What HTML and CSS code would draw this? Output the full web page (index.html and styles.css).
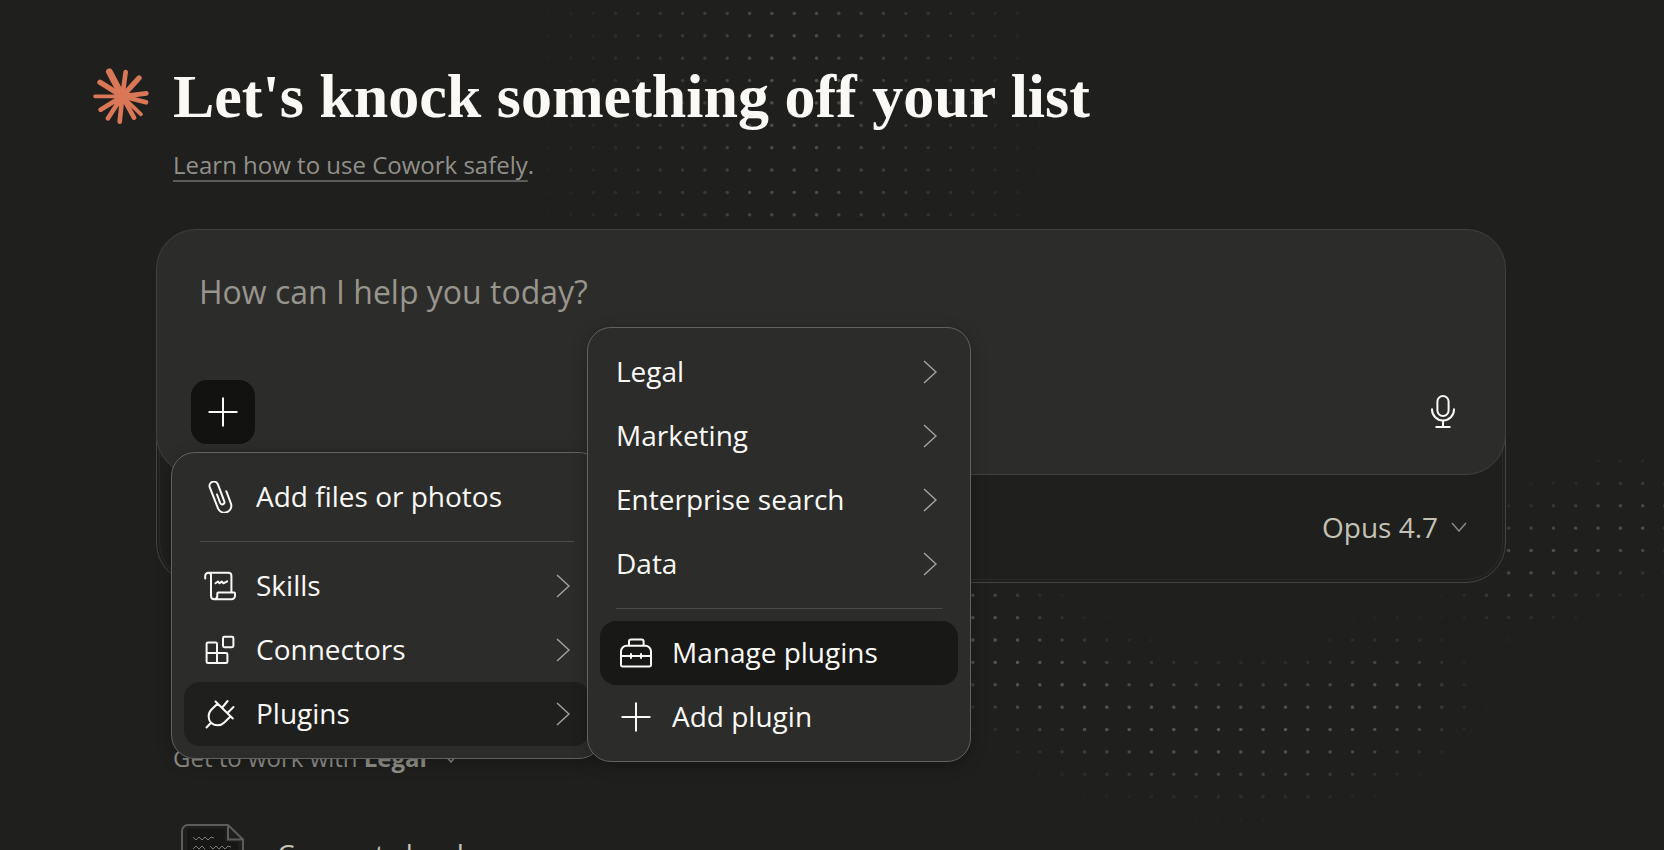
FILE: index.html
```html
<!DOCTYPE html>
<html lang="en">
<head>
  <meta charset="UTF-8">
  <meta name="viewport" content="width=device-width, initial-scale=1.0">
  <title>Cowork</title>
  <link rel="stylesheet" href="styles.css">
</head>
<body>
  <!-- Shared icons -->
  <svg class="sprite" aria-hidden="true">
    <symbol id="chevron-right" viewBox="0 0 14 24"><path d="M1 1l12 11L1 23"/></symbol>
    <symbol id="chevron-down" viewBox="0 0 16 10"><path d="M1 1l7 8 7-8"/></symbol>
    <symbol id="plus" viewBox="0 0 32 32"><path d="M16 2.3v27.4M2.3 16h27.4"/></symbol>
  </svg>

  <!-- Dotted backdrop -->
  <svg class="dots" viewBox="0 0 1664 850" preserveAspectRatio="xMidYMin slice" aria-hidden="true">
    <defs>
      <pattern id="dotGrid" x="783" y="2.2" width="22.33" height="22.38" patternUnits="userSpaceOnUse">
        <circle cx="11.2" cy="11.2" r="1.7" fill="#62625f"/>
      </pattern>
      <radialGradient id="glow">
        <stop offset="0" stop-color="#fff" stop-opacity="0.85"/>
        <stop offset="0.35" stop-color="#fff" stop-opacity="0.45"/>
        <stop offset="1" stop-color="#fff" stop-opacity="0"/>
      </radialGradient>
      <filter id="soften" x="-50%" y="-50%" width="200%" height="200%">
        <feGaussianBlur stdDeviation="26"/>
      </filter>
      <mask id="fade" maskUnits="userSpaceOnUse" x="0" y="0" width="1664" height="850">
        <ellipse cx="794" cy="100" rx="270" ry="700" fill="url(#glow)"/>
        <g fill="none" stroke="#fff" filter="url(#soften)">
          <path d="M950 590Q1020 705 1180 728T1430 670" stroke-width="100" stroke-opacity="0.9"/>
          <path d="M1480 590Q1560 530 1720 510" stroke-width="80" stroke-opacity="0.85"/>
        </g>
      </mask>
    </defs>
    <rect width="1664" height="850" fill="url(#dotGrid)" mask="url(#fade)"/>
  </svg>

  <main class="page">
    <header class="intro">
      <svg class="logo" viewBox="24 22 168 168" aria-hidden="true">
        <circle cx="112" cy="107" r="24" fill="#d97757"/>
        <g stroke="#d97757" stroke-linecap="round">
          <path stroke-width="20" d="M112 107L73 33"/>
          <path stroke-width="16" d="M112 107L45 65M112 107L162 52"/>
          <path stroke-width="14" d="M112 107L122 34M112 107L184 98M112 107L183 125M112 107L147 171M112 107L104 183M112 107L69 173M112 107L47 147"/>
          <path stroke-width="11" d="M112 107L30 107M112 107L168 161"/>
        </g>
      </svg>
      <div class="intro-text">
        <h1>Let's knock something off your list</h1>
        <p class="safety"><a href="#">Learn how to use Cowork safely</a>.</p>
      </div>
    </header>

    <div class="content">
      <div class="composer-wrap">
        <form class="composer">
          <textarea class="prompt" aria-label="Message" placeholder="How can I help you today?"></textarea>
          <div class="composer-actions">
            <button type="button" class="add-button" aria-label="Add">
              <svg class="icon" viewBox="0 0 32 32"><use href="#plus"/></svg>
            </button>
            <button type="button" class="mic-button" aria-label="Dictate">
              <svg class="mic-icon" viewBox="0 0 36 36">
                <rect x="12.4" y="2" width="11.2" height="20" rx="5.6"/>
                <path d="M7 14.5v1a11 11 0 0 0 22 0v-1M18 26.5V33M10.5 33h15"/>
              </svg>
            </button>
          </div>
        </form>

        <div class="tray">
          <label class="model-picker">
            <select aria-label="Model">
              <option>Opus 4.7</option>
            </select>
            <svg class="chevron-down" viewBox="0 0 16 10"><use href="#chevron-down"/></svg>
          </label>
        </div>

        <div class="menu add-menu" role="menu">
          <button type="button" class="menu-item" role="menuitem">
            <svg class="icon" viewBox="0 0 32 32">
              <path d="M22.3 10.2l4.6 12.2a6.9 6.9 0 0 1-13 4.8L5.8 6.4A4.3 4.3 0 0 1 13.9 3.4l6.4 17a2.2 2.2 0 0 1-4.1 1.6L13 13.5"/>
            </svg>
            <span>Add files or photos</span>
          </button>
          <hr>
          <button type="button" class="menu-item" role="menuitem">
            <svg class="icon" viewBox="0 0 32 32">
              <path d="M1.2 8.5V6a3.2 3.2 0 0 1 3.2-3.2h20a3 3 0 0 1 3 3v16.500M4.400 2.800A2.600 2.600 0 0 1 7 5.400V26a3.300 3.300 0 0 0 3.300 3.200h17.200a3.500 3.500 0 0 0 3.500-3.500v-2.200a1 1 0 0 0-1-1H14.300a1 1 0 0 0-1 1V26a3.200 3.200 0 0 1-3 3.200"/>
              <path d="M11.500 13.300l2.500-1.800 1.600 1.800 2.200-1.800 1.600 1.800 3.800-2"/>
            </svg>
            <span>Skills</span>
            <svg class="chevron" viewBox="0 0 14 24"><use href="#chevron-right"/></svg>
          </button>
          <button type="button" class="menu-item" role="menuitem">
            <svg class="icon" viewBox="0 0 32 32">
              <path d="M13 19V9.800a1.400 1.400 0 0 0-1.400-1.400H4a1.400 1.400 0 0 0-1.400 1.400v17.900A1.400 1.400 0 0 0 4 29.100h18a1.400 1.400 0 0 0 1.400-1.400v-7.300A1.400 1.400 0 0 0 22 19H2.600M13 19v10"/>
              <rect x="19" y="2.800" width="10.400" height="10.400" rx="1.400"/>
            </svg>
            <span>Connectors</span>
            <svg class="chevron" viewBox="0 0 14 24"><use href="#chevron-right"/></svg>
          </button>
          <button type="button" class="menu-item open" role="menuitem" aria-expanded="true">
            <svg class="icon" viewBox="0 0 32 32">
              <path d="M11.500 3.500l17.300 17M18.300 9.500L23.600 3M23.500 15l6-6M13.500 5.700l-6 5.800c-4 4-3.500 10-.5 13.100 3.500 3.700 9.500 3.600 13 .1l6.500-6.200M2.500 29.500L7 24.800"/>
            </svg>
            <span>Plugins</span>
            <svg class="chevron" viewBox="0 0 14 24"><use href="#chevron-right"/></svg>
          </button>
        </div>

        <div class="menu plugin-menu" role="menu">
          <button type="button" class="menu-item text-only" role="menuitem">
            <span>Legal</span>
            <svg class="chevron" viewBox="0 0 14 24"><use href="#chevron-right"/></svg>
          </button>
          <button type="button" class="menu-item text-only" role="menuitem">
            <span>Marketing</span>
            <svg class="chevron" viewBox="0 0 14 24"><use href="#chevron-right"/></svg>
          </button>
          <button type="button" class="menu-item text-only" role="menuitem">
            <span>Enterprise search</span>
            <svg class="chevron" viewBox="0 0 14 24"><use href="#chevron-right"/></svg>
          </button>
          <button type="button" class="menu-item text-only" role="menuitem">
            <span>Data</span>
            <svg class="chevron" viewBox="0 0 14 24"><use href="#chevron-right"/></svg>
          </button>
          <hr>
          <button type="button" class="menu-item active" role="menuitem">
            <svg class="icon" viewBox="0 0 32 32">
              <path d="M1 27.800V14.500a5.700 5.700 0 0 1 5.700-5.700h18.600a5.700 5.700 0 0 1 5.700 5.700v13.300a1.700 1.700 0 0 1-1.700 1.700H2.700A1.700 1.700 0 0 1 1 27.800zM1 19h30M11 17v4M21 17v4M9 8.800V4.600a2 2 0 0 1 2-2h10.600a2 2 0 0 1 2 2v4.200"/>
            </svg>
            <span>Manage plugins</span>
          </button>
          <button type="button" class="menu-item" role="menuitem">
            <svg class="icon" viewBox="0 0 32 32"><use href="#plus"/></svg>
            <span>Add plugin</span>
          </button>
        </div>
      </div>

      <section class="suggestions">
        <button type="button" class="suggestion-picker">
          <span>Get to work with <strong>Legal</strong></span>
          <svg class="chevron-down" viewBox="0 0 16 10"><use href="#chevron-down"/></svg>
        </button>
        <a href="#" class="suggestion">
          <svg class="doc-icon" viewBox="0 0 64 76">
            <path class="doc-fill" d="M6 5h38v13h13v58H6z"/>
            <path d="M47 1H7a6 6 0 0 0-6 6v62a6 6 0 0 0 6 6h49a6 6 0 0 0 6-6V15.500zM47 1v14.500h15"/>
            <path class="doc-lines" d="M12 13l3 3 3-3 3 3 3-3 3 3 3-3 3 1M12 25l3-3 3 3 3-3 3 3M29 22l3 3 3-3 3 3 3-3 3 3 3-3 3 1"/>
          </svg>
          <span>Connect cloud</span>
        </a>
      </section>
    </div>
  </main>
</body>
</html>
```
FILE: styles.css
```css
* {
  box-sizing: border-box;
}
body {
  position: relative;
  height: 100vh;
  margin: 0;
  overflow: hidden;
  background-color: #1f1f1e;
  color: #faf9f5;
  font-family: "Open Sans", "Liberation Sans", sans-serif;
  font-size: 28px;
}
button,
select,
textarea {
  font: inherit;
  color: inherit;
  background: none;
  border: none;
  padding: 0;
  margin: 0;
  cursor: pointer;
}
svg {
  flex-shrink: 0;
  fill: none;
}
.sprite {
  position: absolute;
  width: 0;
  height: 0;
}
.dots {
  position: absolute;
  top: 0;
  left: 0;
  width: 100%;
  height: 100%;
}
.page {
  position: relative;
  padding: 64px 158px 0 93px;
}

/* Heading */
.intro {
  display: flex;
  align-items: flex-start;
  gap: 24px;
}
.logo {
  width: 56px;
  height: 56px;
  margin-top: 4px;
}
h1 {
  margin: 0;
  font-family: "Liberation Serif", serif;
  font-size: 62px;
  font-weight: 700;
  line-height: 64px;
}
.safety {
  margin: 21px 0 0;
  color: #91908a;
  font-size: 24px;
  line-height: 32px;
}
.safety a {
  color: inherit;
  text-decoration: underline 2px #5c5b57;
  text-underline-offset: 6px;
  text-decoration-skip-ink: none;
}
.content {
  padding-left: 63px;
}

/* Composer */
.composer-wrap {
  position: relative;
  margin-top: 48px;
}
.composer {
  position: relative;
  z-index: 1;
  padding: 40px 30px 30px 34px;
  border: 1px solid #40403d;
  border-radius: 40px;
  background-color: #2c2c2b;
}
.prompt {
  display: block;
  width: 100%;
  height: 110px;
  padding: 0 8px;
  font-size: 32px;
  line-height: 44px;
  resize: none;
  outline: none;
  cursor: text;
}
.prompt::placeholder {
  color: #97958c;
  opacity: 1;
}
.composer-actions {
  display: flex;
  justify-content: space-between;
}
.add-button,
.mic-button {
  display: flex;
  align-items: center;
  justify-content: center;
  width: 64px;
  height: 64px;
  border-radius: 16px;
}
.add-button {
  background-color: #121211;
}
.icon {
  width: 32px;
  height: 32px;
  stroke: currentColor;
  stroke-width: 2;
  stroke-linecap: round;
  stroke-linejoin: round;
}
.mic-icon {
  width: 36px;
  height: 36px;
  stroke: currentColor;
  stroke-width: 2;
}
.tray {
  position: relative;
  display: flex;
  justify-content: flex-end;
  margin-top: -42px;
  padding: 73px 38px 35px;
  border: 1px solid #454542;
  border-radius: 0 0 40px 40px;
  background-color: #1f1f1e;
}
.tray::before {
  content: "";
  position: absolute;
  inset: 0 2px 2px;
  border: 1px solid #2a2a28;
  border-top: none;
  border-radius: 0 0 37px 37px;
  pointer-events: none;
}
.model-picker {
  display: flex;
  align-items: center;
  gap: 12px;
  color: #c3c2b7;
}
.model-picker select {
  appearance: none;
  line-height: 40px;
}
.chevron-down {
  width: 16px;
  height: 10px;
  stroke: #8a8982;
  stroke-width: 1.5;
}

/* Menus */
.menu {
  position: absolute;
  z-index: 2;
  padding: 12px;
  border: 1px solid #62625e;
  border-radius: 24px;
  background-color: #2c2c2b;
  box-shadow: 0 4px 16px rgba(0, 0, 0, 0.25);
}
.add-menu {
  top: 223px;
  left: 15px;
  width: 432px;
}
.plugin-menu {
  top: 98px;
  left: 431px;
  width: 384px;
}
.menu-item {
  display: flex;
  align-items: center;
  gap: 20px;
  width: 100%;
  height: 64px;
  padding: 0 20px;
  border-radius: 16px;
  text-align: left;
}
.menu-item span {
  flex: 1;
  padding-bottom: 2px;
}
.text-only {
  padding: 0 21px 0 16px;
}
.menu-item.open {
  background-color: #1f1f1e;
}
.menu-item.active {
  background-color: #181817;
}
.menu hr {
  height: 1px;
  margin: 12px 16px;
  border: none;
  background-color: #4b4b48;
}
.chevron {
  width: 14px;
  height: 24px;
  stroke: #a3a29b;
  stroke-width: 1.5;
}

/* Suggestions */
.suggestions {
  display: flex;
  flex-direction: column;
  align-items: flex-start;
  gap: 50px;
  margin-top: 159px;
  padding-left: 17px;
}
.suggestion-picker {
  display: flex;
  align-items: center;
  gap: 16px;
  color: #91908a;
  font-size: 24px;
  line-height: 32px;
}
.suggestion-picker strong {
  font-weight: 700;
}
.suggestion {
  display: flex;
  gap: 32px;
  padding-left: 8px;
  color: #c3c2b7;
  line-height: 60px;
  text-decoration: none;
}
.doc-icon {
  width: 64px;
  height: 76px;
  stroke: #5c5c59;
  stroke-width: 2;
}
.doc-icon .doc-fill {
  fill: #171716;
  stroke: none;
}
.doc-icon .doc-lines {
  stroke: #7d7c77;
  stroke-width: 1;
}
```
